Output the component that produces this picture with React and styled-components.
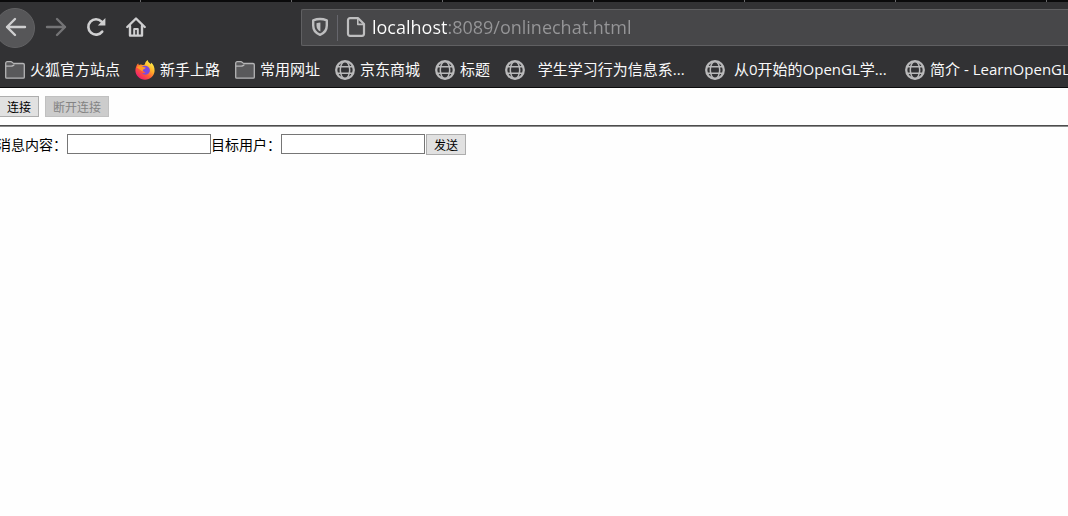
// Libraries
import { useState } from "react";
import styled, { createGlobalStyle } from "styled-components";

const GlobalStyle = createGlobalStyle`
  * {
    box-sizing: border-box;
  }

  body {
    margin: 0;
    overflow-x: hidden;
    background-color: #fefefe;
    font-family: "Open Sans", "Noto Sans CJK SC", sans-serif;
  }
`;

// Browser chrome
const Chrome = styled.header`
  background-color: #323234;
  border-bottom: 1px solid #0c0c0d;
  overflow: hidden;
`;

const TabStrip = styled.div`
  height: 2px;
  padding-left: 140px;
  display: flex;
  gap: 150px;
  background-color: #0a0a0b;
`;

const TabEdge = styled.span`
  flex: none;
  width: 1px;
  height: 2px;
  background-color: #6a6a6c;
`;

const NavBar = styled.nav`
  display: flex;
  align-items: center;
  height: 51px;
`;

const NavButton = styled.button`
  flex: none;
  display: flex;
  align-items: center;
  justify-content: center;
  width: 40px;
  height: 40px;
  padding: 0 0 1px 1px;
  border: none;
  background: none;
  color: ${({ disabled }) => (disabled ? "#747476" : "#cfcfd0")};
`;

const BackButton = styled(NavButton)`
  margin-left: -5px;
  border: 1px solid #626264;
  border-radius: 50%;
  background-color: #565658;
`;

const AddressBar = styled.div`
  flex: 1;
  display: flex;
  align-items: center;
  height: 37px;
  margin-left: 146px;
  padding-left: 8px;
  border: 1px solid #606062;
  border-right: none;
  border-radius: 2px 0 0 2px;
  background-color: #474749;
  color: #bebebf;

  svg {
    margin-bottom: 2px;
  }
`;

const Divider = styled.span`
  width: 1px;
  height: 26px;
  margin: 0 8px 0 7px;
  background-color: #66666c;
`;

const AddressInput = styled.input`
  flex: 1;
  min-width: 0;
  height: 35px;
  margin-left: 6px;
  padding: 0 0 2px;
  border: none;
  outline: none;
  font-family: "Open Sans", sans-serif;
  font-size: 18px;
  color: transparent;
  caret-color: #ffffff;
  background-image: linear-gradient(to right, #ffffff 76px, #969698 76px);
  background-clip: text;
`;

const Bookmarks = styled.div`
  display: flex;
  align-items: center;
  gap: 15px;
  height: 34px;
  padding-left: 5px;
`;

const Bookmark = styled.a`
  flex: none;
  display: flex;
  align-items: center;
  gap: 5px;
  color: #f9f9fa;
  font-size: 15px;
  line-height: 20px;
  text-decoration: none;
  white-space: pre;

  span {
    width: ${({ $long }) => ($long ? "160px" : "auto")};
    padding-bottom: 2px;
  }
`;

// Page
const Page = styled.main`
  padding-top: 8px;
  overflow: hidden;
`;

const Toolbar = styled.div`
  display: flex;
  gap: 6px;
  margin-left: -1px;
`;

const Button = styled.button`
  height: 21px;
  padding: 0 7px;
  border: 1px solid ${({ disabled }) => (disabled ? "#c0c0c0" : "#adadad")};
  background-color: ${({ disabled }) => (disabled ? "#cccccc" : "#e1e1e1")};
  color: ${({ disabled }) => (disabled ? "#838383" : "#000000")};
  font-family: "Noto Sans CJK SC", sans-serif;
  font-size: 12px;
  line-height: 18px;
`;

const Rule = styled.hr`
  height: 2px;
  margin: 8px 0 7px;
  border: none;
  border-top: 1px solid #4c4c4c;
  border-bottom: 1px solid #8c8c8c;
`;

const MessageForm = styled.form`
  display: flex;
  align-items: flex-start;
  margin-left: -3px;
  font-family: "Noto Sans CJK SC", sans-serif;
  font-size: 14px;
  line-height: 20px;

  button {
    margin-left: 1px;
  }
`;

const TextInput = styled.input`
  width: 144px;
  height: 20px;
  padding: 1px 2px;
  border: 1px solid #767676;
  background-color: #ffffff;
  font-size: 13px;
`;

// Icons
const BackIcon = () => (
  <svg width="22" height="22" viewBox="0 0 22 22" fill="none" stroke="currentColor" strokeWidth="2.4" strokeLinecap="round" strokeLinejoin="round">
    <path d="M20 11H2M10 3L2 11l8 8" />
  </svg>
);

const ForwardIcon = () => (
  <svg width="22" height="22" viewBox="0 0 22 22" fill="none" stroke="currentColor" strokeWidth="2.4" strokeLinecap="round" strokeLinejoin="round">
    <path d="M2 11h18M12 3l8 8-8 8" />
  </svg>
);

const ReloadIcon = () => (
  <svg width="20" height="20" viewBox="0 0 20 20" fill="none">
    <path d="M16.2 14.6A7.7 7.7 0 1 1 15.6 4.6L17 6" stroke="currentColor" strokeWidth="2.6" strokeLinecap="round" />
    <path d="M19.4 1v7.6h-7.6z" fill="currentColor" />
  </svg>
);

const HomeIcon = () => (
  <svg width="20" height="20" viewBox="0 0 20 20" fill="none" stroke="currentColor" strokeLinecap="round" strokeLinejoin="round">
    <path d="M1.3 10L10 1.5l8.7 8.5" strokeWidth="2.4" />
    <path d="M4 9v9.6h12V9" strokeWidth="2.4" />
    <path d="M8.2 18v-6h3.6v6" strokeWidth="2" />
  </svg>
);

const ShieldIcon = () => (
  <svg width="20" height="20" viewBox="0 0 20 20" fill="none">
    <path d="M10 2c2.4 0 4.6.5 6.8 1.4v5.2c0 4.6-2.4 7.6-6.8 9.2-4.4-1.6-6.8-4.6-6.8-9.2V3.4C5.400 2.500 7.600 2 10 2z" stroke="currentColor" strokeWidth="2.4" strokeLinejoin="round" />
    <path d="M10.400 5.400v9C7.800 13.200 6.500 11.300 6.500 8.700V6.200c1.200-.5 2.500-.8 3.900-.8z" fill="currentColor" />
  </svg>
);

const PageIcon = () => (
  <svg width="20" height="20" viewBox="0 0 20 20" fill="none" stroke="currentColor" strokeWidth="2.2" strokeLinejoin="round">
    <path d="M4 1.200h8.200L18 7v9.800a2 2 0 0 1-2 2H4a2 2 0 0 1-2-2V3.200a2 2 0 0 1 2-2z" />
    <path d="M11.800 1.800V7.400H17.600" strokeWidth="1.6" />
  </svg>
);

const FolderIcon = () => (
  <svg width="20" height="20" viewBox="0 0 20 20" fill="#59595b" stroke="#b4b4b5" strokeWidth="1.3" strokeLinejoin="round">
    <path d="M.7 17.200V3.200a1.500 1.500 0 0 1 1.500-1.500h3.600c1.600 0 1.800 1.800 3.200 1.800h9a1.300 1.300 0 0 1 1.300 1.300v12.400a1 1 0 0 1-1 1H1.700a1 1 0 0 1-1-1z" />
    <path d="M1 6.200h5.400c1.200 0 1.800-1.200 3-1.200" fill="none" />
  </svg>
);

const GlobeIcon = () => (
  <svg width="20" height="20" viewBox="0 0 20 20" fill="none" stroke="#b9b9ba">
    <circle cx="10" cy="10" r="8.8" strokeWidth="2.3" />
    <ellipse cx="10" cy="10" rx="4.7" ry="8.6" strokeWidth="1.5" />
    <path d="M2 6.700h16M2 13.300h16" strokeWidth="1.5" />
  </svg>
);

const FirefoxIcon = () => (
  <svg width="20" height="20" viewBox="0 0 20 20">
    <defs>
      <linearGradient id="flame" x1="0.85" y1="0.1" x2="0.2" y2="0.9">
        <stop offset="0" stopColor="#fff04a" />
        <stop offset="0.35" stopColor="#ffb02a" />
        <stop offset="0.65" stopColor="#ff5b36" />
        <stop offset="1" stopColor="#ef1f6e" />
      </linearGradient>
    </defs>
    <path d="M12.600 0c.4 2.200 2 2.800 3.200 4.200.3-.5.2-1.200.1-1.700C18.400 4.400 19.800 7.400 19.600 11c-.4 5-4.600 8.700-9.600 8.700S.6 15.800.4 10.800C.3 7.800 1.400 5.200 3.200 3.200c.1 1 .4 1.500.8 1.900.7-.6 1.800-.7 2.700-.4C8 5 8.700 5.200 9.800 4.600 10 2.800 11 1 12.600 0z" fill="url(#flame)" />
    <path d="M6.200 7.200c1.600-1.500 4.800-2.100 6.900-.5 2.200 1.700 2.400 4.800.7 6.600-1.900 2-5.200 1.800-6.900-.2 1.600.4 2.900.2 3.600-.8-1.700-.3-2.300-1.600-3.900-2.300-.7-.9-.9-1.900-.4-2.800z" fill="#7b49e0" />
    <path d="M1.600 7.200C3.500 5.900 6 5.800 7.800 6.700c1 .6 2.100.5 3 .8-.4 1.300-1.700 1.500-2.600 2.100-.5.4-.2 1.300-.8 1.900" fill="#ff9b26" />
  </svg>
);

const icons = {
  folder: FolderIcon,
  firefox: FirefoxIcon,
  globe: GlobeIcon,
};

const bookmarks = [
  { icon: "folder", title: "火狐官方站点" },
  { icon: "firefox", title: "新手上路" },
  { icon: "folder", title: "常用网址" },
  { icon: "globe", title: "京东商城" },
  { icon: "globe", title: "标题" },
  { icon: "globe", title: "  学生学习行为信息系...", long: true },
  { icon: "globe", title: " 从0开始的OpenGL学...", long: true },
  { icon: "globe", title: "简介 - LearnOpenGL", long: true },
];

const tabEdges = [1, 2, 3, 4, 5, 6, 7];

function App() {
  const [url, setUrl] = useState("localhost:8089/onlinechat.html");
  const [message, setMessage] = useState("");
  const [target, setTarget] = useState("");

  return (
    <>
      <GlobalStyle />
      <Chrome>
        <TabStrip>
          {tabEdges.map((edge) => (
            <TabEdge key={edge} />
          ))}
        </TabStrip>
        <NavBar>
          <BackButton type="button" aria-label="后退">
            <BackIcon />
          </BackButton>
          <NavButton type="button" aria-label="前进" disabled>
            <ForwardIcon />
          </NavButton>
          <NavButton type="button" aria-label="刷新">
            <ReloadIcon />
          </NavButton>
          <NavButton type="button" aria-label="主页">
            <HomeIcon />
          </NavButton>
          <AddressBar>
            <ShieldIcon />
            <Divider />
            <PageIcon />
            <AddressInput
              aria-label="网址"
              spellCheck={false}
              value={url}
              onChange={(e) => setUrl(e.target.value)}
            />
          </AddressBar>
        </NavBar>
        <Bookmarks>
          {bookmarks.map(({ icon, title, long }) => {
            const Icon = icons[icon];
            return (
              <Bookmark key={title} href="#" $long={long}>
                <Icon />
                <span>{title}</span>
              </Bookmark>
            );
          })}
        </Bookmarks>
      </Chrome>

      <Page>
        <Toolbar>
          <Button type="button">连接</Button>
          <Button type="button" disabled>
            断开连接
          </Button>
        </Toolbar>
        <Rule />
        <MessageForm onSubmit={(e) => e.preventDefault()}>
          <label htmlFor="message">消息内容：</label>
          <TextInput
            id="message"
            value={message}
            onChange={(e) => setMessage(e.target.value)}
          />
          <label htmlFor="target">目标用户：</label>
          <TextInput
            id="target"
            value={target}
            onChange={(e) => setTarget(e.target.value)}
          />
          <Button type="submit">发送</Button>
        </MessageForm>
      </Page>
    </>
  );
}

export default App;
